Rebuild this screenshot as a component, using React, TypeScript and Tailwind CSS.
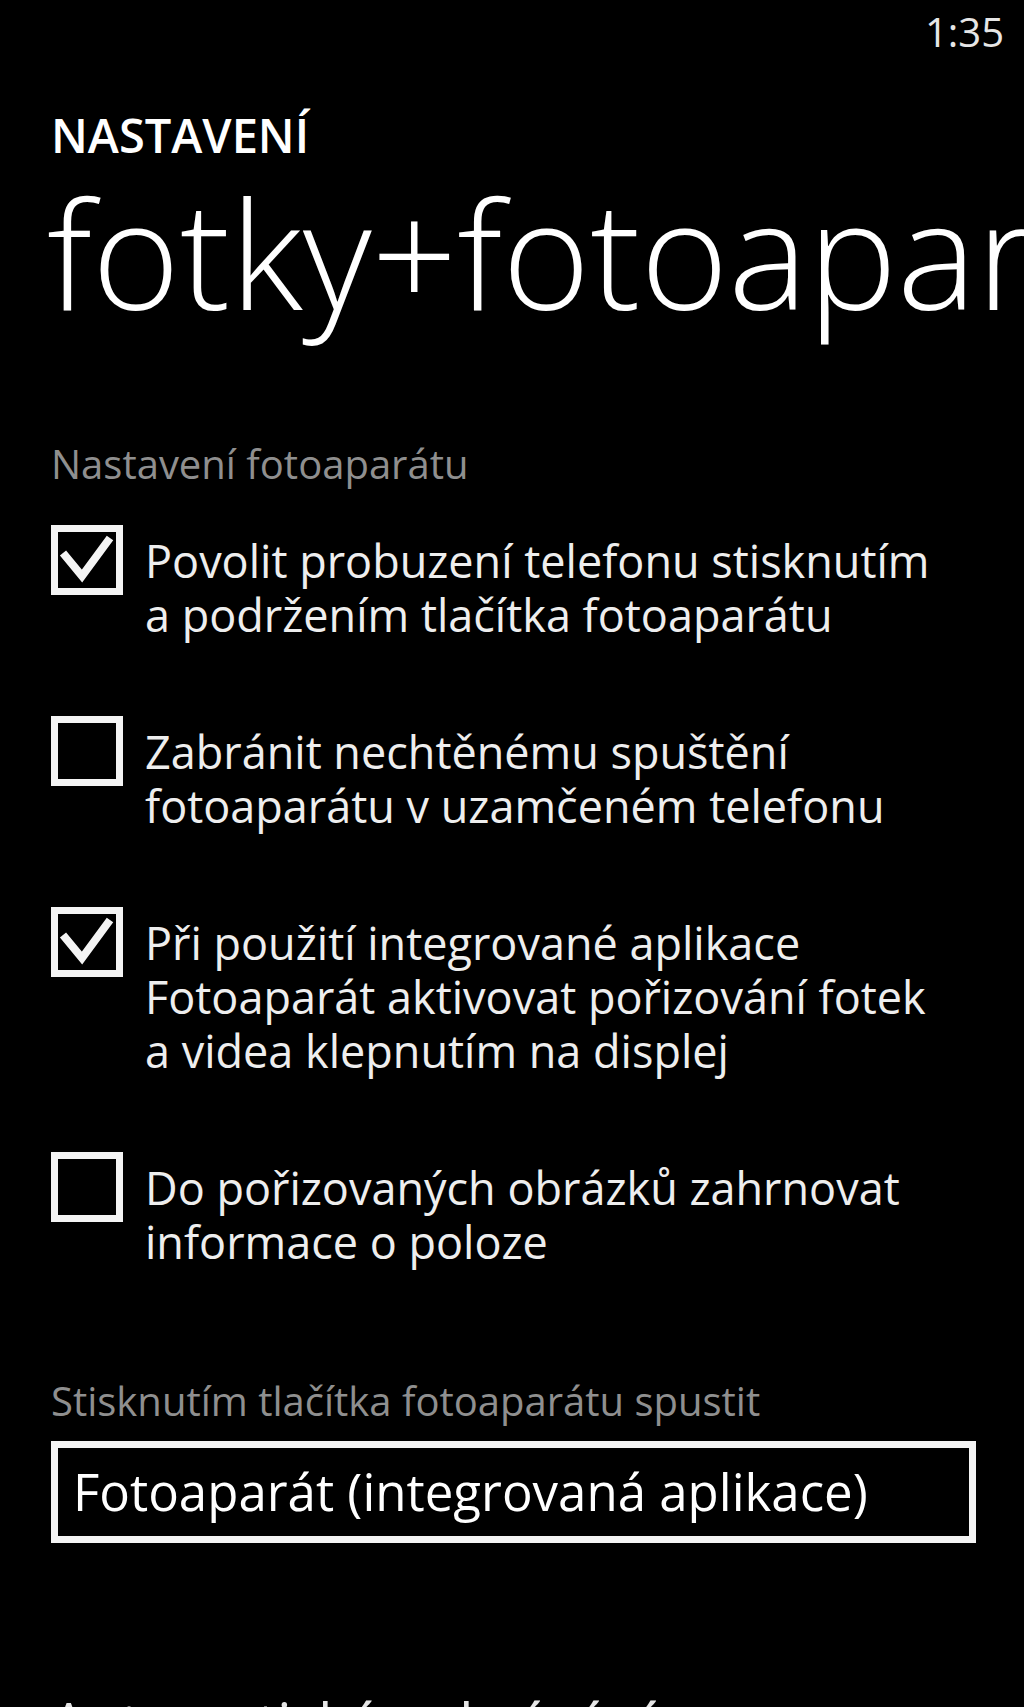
import { Fragment } from "react";

type Option = {
  checked: boolean;
  lines: string[];
};

const options: Option[] = [
  {
    checked: true,
    lines: ["Povolit probuzení telefonu stisknutím", "a podržením tlačítka fotoaparátu"],
  },
  {
    checked: false,
    lines: ["Zabránit nechtěnému spuštění", "fotoaparátu v uzamčeném telefonu"],
  },
  {
    checked: true,
    lines: [
      "Při použití integrované aplikace",
      "Fotoaparát aktivovat pořizování fotek",
      "a videa klepnutím na displej",
    ],
  },
  {
    checked: false,
    lines: ["Do pořizovaných obrázků zahrnovat", "informace o poloze"],
  },
];

const CheckBox = ({ checked }: { checked: boolean }) => (
  <div className="relative h-[70px] w-[72px] shrink-0 border-[7px] border-[#f4f4f4] bg-black">
    {checked && (
      <svg
        className="absolute left-0 top-0"
        width="58"
        height="56"
        viewBox="0 0 58 56"
        fill="none"
      >
        <polyline
          points="5,21 24,44 52,6"
          stroke="#f4f4f4"
          strokeWidth="8"
          strokeLinejoin="miter"
        />
      </svg>
    )}
  </div>
);

const OptionRow = ({ option }: { option: Option }) => (
  <div className="flex items-start gap-[22px]">
    <CheckBox checked={option.checked} />
    <p className="pt-[9px] text-[45px] leading-[54px] text-[#eeeeee] whitespace-nowrap">
      {option.lines.map((line, i) => (
        <Fragment key={line}>
          {i > 0 && <br />}
          {line}
        </Fragment>
      ))}
    </p>
  </div>
);

export default function App() {
  return (
    <div className="h-screen overflow-hidden bg-black text-white font-['Open_Sans',sans-serif]">
      {/* stavový řádek */}
      <div className="flex justify-end pr-[20px] pt-[12px] text-[40px] leading-[40px] text-[#e6e6e6]">
        1:35
      </div>

      <div className="pl-[51px] pr-[48px]">
        <div className="mt-[58px] text-[47px] leading-[50px] font-semibold">NASTAVENÍ</div>
        <div className="-ml-[4px] mt-[18px] whitespace-nowrap text-[150px] leading-[148px] font-light">
          fotky+fotoaparát
        </div>

        <div className="mt-[114px] text-[40px] leading-[48px] text-[#8f8f8f]">
          Nastavení fotoaparátu
        </div>

        <div className="mt-[37px] flex flex-col gap-[74px]">
          {options.map((option) => (
            <OptionRow key={option.lines[0]} option={option} />
          ))}
        </div>

        <div className="mt-[108px] text-[40px] leading-[48px] text-[#8f8f8f]">
          Stisknutím tlačítka fotoaparátu spustit
        </div>

        <div className="mt-[16px] h-[102px] border-[7px] border-[#f4f4f4] bg-black pl-[15px] pt-[13px]">
          <span className="text-[51px] leading-[60px] text-white whitespace-nowrap">
            Fotoaparát (integrovaná aplikace)
          </span>
        </div>

        <div className="mt-[146px] whitespace-nowrap text-[56px] leading-[67px] text-[#e6e6e6]">
          Automatické nahrávání
        </div>
      </div>
    </div>
  );
}
